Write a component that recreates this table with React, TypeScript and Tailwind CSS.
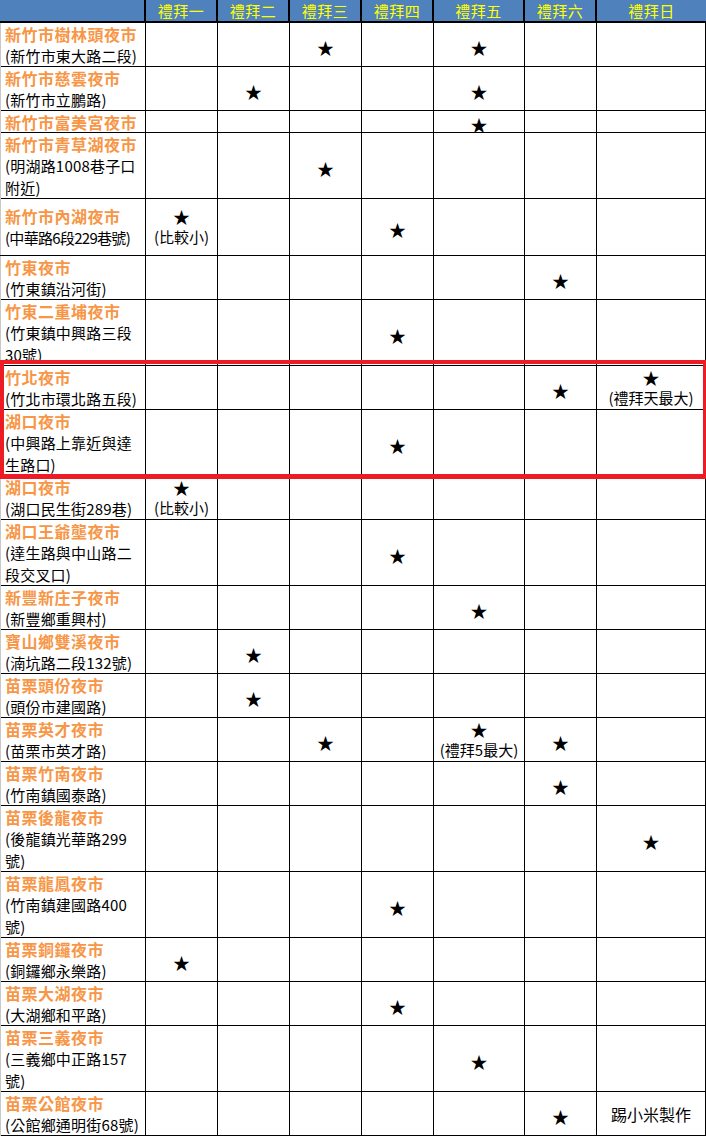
const DAYS = ['禮拜一', '禮拜二', '禮拜三', '禮拜四', '禮拜五', '禮拜六', '禮拜日']

const COLS = 'grid grid-cols-[146px_72px_72px_72px_72px_91px_72px_109px]'

type Mark = { col: number; note?: string }
type Row = { name: string; addr: string[]; h: string; marks: Mark[]; sign?: string; tight?: boolean }

const ROWS: Row[] = [
  { name: '新竹市樹林頭夜市', addr: ['(新竹市東大路二段)'], h: 'h-[44px]', marks: [{ col: 3 }, { col: 5 }] },
  { name: '新竹市慈雲夜市', addr: ['(新竹市立鵬路)'], h: 'h-[44px]', marks: [{ col: 2 }, { col: 5 }] },
  { name: '新竹市富美宮夜市', addr: [], h: 'h-[22px]', marks: [{ col: 5 }] },
  { name: '新竹市青草湖夜市', addr: ['(明湖路1008巷子口', '附近)'], h: 'h-[66px]', marks: [{ col: 3 }] },
  { name: '新竹市內湖夜市', addr: ['(中華路6段229巷號)'], h: 'h-[57px]', marks: [{ col: 1, note: '(比較小)' }, { col: 4 }], tight: true },
  { name: '竹東夜市', addr: ['(竹東鎮沿河街)'], h: 'h-[44px]', marks: [{ col: 6 }] },
  { name: '竹東二重埔夜市', addr: ['(竹東鎮中興路三段', '30號)'], h: 'h-[66px]', marks: [{ col: 4 }] },
  { name: '竹北夜市', addr: ['(竹北市環北路五段)'], h: 'h-[44px]', marks: [{ col: 6 }, { col: 7, note: '(禮拜天最大)' }] },
  { name: '湖口夜市', addr: ['(中興路上靠近與達', '生路口)'], h: 'h-[66px]', marks: [{ col: 4 }] },
  { name: '湖口夜市', addr: ['(湖口民生街289巷)'], h: 'h-[44px]', marks: [{ col: 1, note: '(比較小)' }] },
  { name: '湖口王爺壟夜市', addr: ['(達生路與中山路二', '段交叉口)'], h: 'h-[66px]', marks: [{ col: 4 }] },
  { name: '新豐新庄子夜市', addr: ['(新豐鄉重興村)'], h: 'h-[44px]', marks: [{ col: 5 }] },
  { name: '寶山鄉雙溪夜市', addr: ['(湳坑路二段132號)'], h: 'h-[44px]', marks: [{ col: 2 }] },
  { name: '苗栗頭份夜市', addr: ['(頭份市建國路)'], h: 'h-[44px]', marks: [{ col: 2 }] },
  { name: '苗栗英才夜市', addr: ['(苗栗市英才路)'], h: 'h-[44px]', marks: [{ col: 3 }, { col: 5, note: '(禮拜5最大)' }, { col: 6 }] },
  { name: '苗栗竹南夜市', addr: ['(竹南鎮國泰路)'], h: 'h-[44px]', marks: [{ col: 6 }] },
  { name: '苗栗後龍夜市', addr: ['(後龍鎮光華路299', '號)'], h: 'h-[66px]', marks: [{ col: 7 }] },
  { name: '苗栗龍鳳夜市', addr: ['(竹南鎮建國路400', '號)'], h: 'h-[66px]', marks: [{ col: 4 }] },
  { name: '苗栗銅鑼夜市', addr: ['(銅鑼鄉永樂路)'], h: 'h-[44px]', marks: [{ col: 1 }] },
  { name: '苗栗大湖夜市', addr: ['(大湖鄉和平路)'], h: 'h-[44px]', marks: [{ col: 4 }] },
  { name: '苗栗三義夜市', addr: ['(三義鄉中正路157', '號)'], h: 'h-[66px]', marks: [{ col: 5 }] },
  { name: '苗栗公館夜市', addr: ['(公館鄉通明街68號)'], h: 'h-[44px]', marks: [{ col: 6 }], sign: '踢小米製作' },
]

function DayCell({ mark, sign }: { mark?: Mark; sign?: string }) {
  return (
    <div className="border-r border-black flex flex-col items-center justify-center whitespace-nowrap">
      {mark && (
        <div className={`text-[17px] ${mark.note ? 'leading-[20px]' : 'leading-[22px]'}`}>
          <span className={`relative ${mark.note ? 'top-[1px]' : 'top-[3px]'}`}>★</span>
        </div>
      )}
      {mark?.note && <div className="leading-[22px] text-[15px]">{mark.note}</div>}
      {sign && <div className="leading-[22px] text-[16px]">{sign}</div>}
    </div>
  )
}

export default function App() {
  return (
    <div className="relative w-[706px] h-[1137px] bg-white text-black font-['Noto_Sans_CJK_TC',sans-serif] overflow-hidden">
      {/* Header */}
      <div className={`${COLS} h-[23px] bg-[#4f81bd] border-b-2 border-black text-[#ffff00] text-[15px] tracking-[0.5px]`}>
        <div className="border-r-2 border-black" />
        {DAYS.map((d, i) => (
          <div
            key={d}
            className={`flex items-center justify-center leading-[21px] ${i < 6 ? 'border-r-2 border-black' : ''}`}
          >
            {d}
          </div>
        ))}
      </div>

      {/* Rows */}
      {ROWS.map((r, idx) => (
        <div key={idx} className={`${COLS} ${r.h} border-b border-black`}>
          <div className="border-l border-l-[#c8c8c8] border-r border-black pl-[4px] flex flex-col justify-center whitespace-nowrap">
            <div className="leading-[22px] text-[16px] tracking-[0.5px] font-bold text-[#f79646]">{r.name}</div>
            {r.addr.map((a) => (
              <div key={a} className={`leading-[22px] text-[15px] ${r.tight ? 'tracking-[-0.7px]' : 'tracking-[0.2px]'}`}>
                {a}
              </div>
            ))}
          </div>
          {[1, 2, 3, 4, 5, 6, 7].map((c) => (
            <DayCell
              key={c}
              mark={r.marks.find((m) => m.col === c)}
              sign={c === 7 ? r.sign : undefined}
            />
          ))}
        </div>
      ))}

      {/* Highlight box */}
      <div className="absolute left-0 top-[360px] w-[706px] h-[119px] border-t-4 border-b-[5px] border-l-4 border-r-[3px] border-[#ed1c24] pointer-events-none" />
    </div>
  )
}
